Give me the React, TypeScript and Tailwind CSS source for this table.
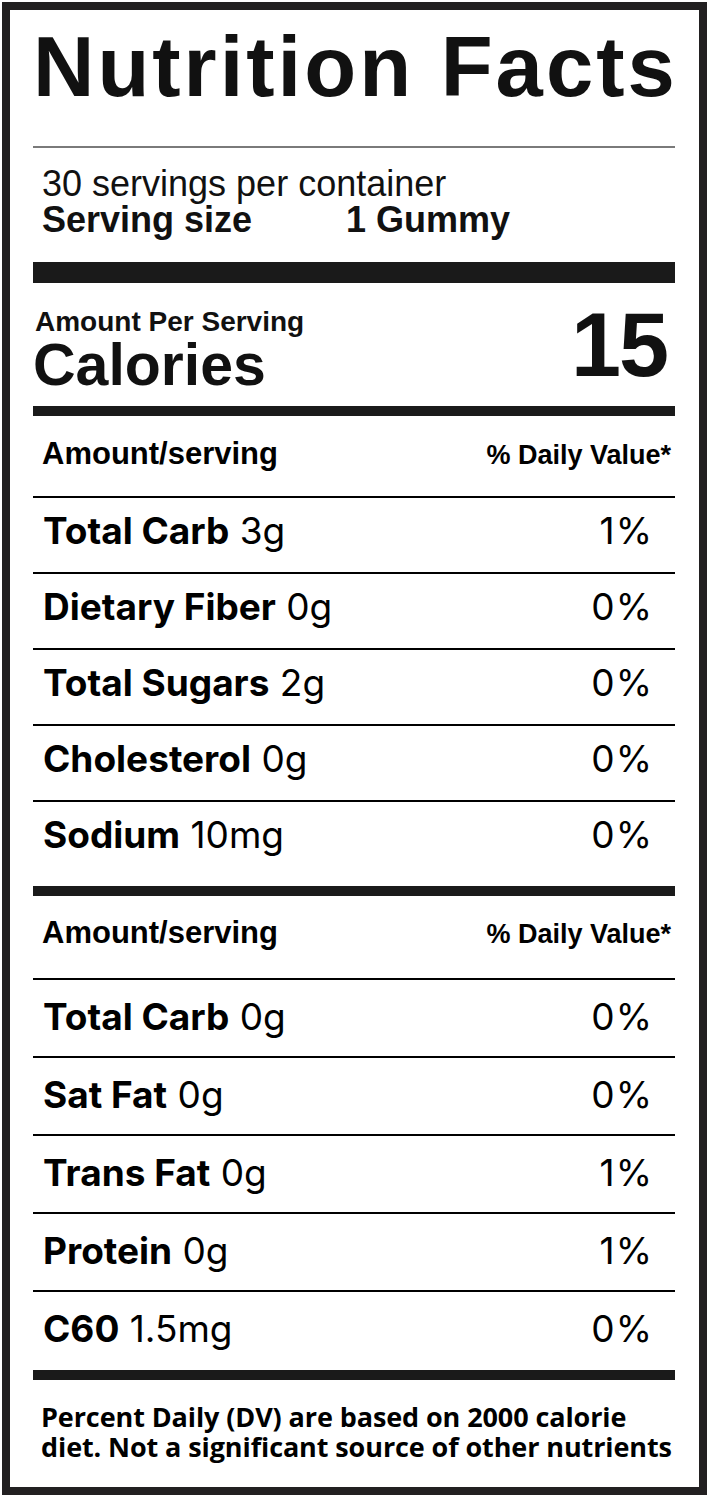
import React from 'react';

type Nutrient = {
  name: string;
  amount: string;
  dv: string;
};

const firstGroup: Nutrient[] = [
  { name: 'Total Carb', amount: '3g', dv: '1%' },
  { name: 'Dietary Fiber', amount: '0g', dv: '0%' },
  { name: 'Total Sugars', amount: '2g', dv: '0%' },
  { name: 'Cholesterol', amount: '0g', dv: '0%' },
  { name: 'Sodium', amount: '10mg', dv: '0%' },
];

const secondGroup: Nutrient[] = [
  { name: 'Total Carb', amount: '0g', dv: '0%' },
  { name: 'Sat Fat', amount: '0g', dv: '0%' },
  { name: 'Trans Fat', amount: '0g', dv: '1%' },
  { name: 'Protein', amount: '0g', dv: '1%' },
  { name: 'C60', amount: '1.5mg', dv: '0%' },
];

const ColumnHeader = ({ className }: { className: string }) => (
  <div className={`flex items-baseline justify-between border-b-2 border-black pl-[9px] pr-[4px] font-['Liberation_Sans',Arial,sans-serif] font-bold text-black ${className}`}>
    <span className="text-[31px] leading-[30px]">Amount/serving</span>
    <span className="text-[27px] leading-[30px]">% Daily Value*</span>
  </div>
);

const NutrientRow = ({ item, rowClass }: { item: Nutrient; rowClass: string }) => (
  <div className={`flex items-start justify-between pl-[10px] pr-[22px] font-['Inter',sans-serif] text-black ${rowClass}`}>
    <p className="whitespace-nowrap">
      <span className="font-bold">{item.name}</span>{' '}
      <span className="font-normal">{item.amount}</span>
    </p>
    <span className="font-normal tracking-[1px]">{item.dv}</span>
  </div>
);

export default function App() {
  return (
    <div className="h-[1500px] w-[709px] bg-white pl-[2px] pt-[2px]">
      <div className="h-[1493px] w-[705px] border-[8px] border-[#222021] bg-white pl-[23px] pr-[24px]">
        <h1 className="mt-[15px] whitespace-nowrap font-['Liberation_Sans',Arial,sans-serif] text-[85px] font-bold leading-[84px] tracking-[3px] text-[#111]">
          Nutrition Facts
        </h1>
        <div className="mt-[37px] h-[2px] bg-[#7a7a7a]" />

        <div className="mt-[18px] pl-[9px] font-['Liberation_Sans',Arial,sans-serif] text-[36px] leading-[36px] text-[#111]">
          <p>30 servings per container</p>
          <p className="flex font-bold">
            <span className="w-[304px]">Serving size</span>
            <span>1 Gummy</span>
          </p>
        </div>
        <div className="mt-[24px] h-[21px] bg-[#1a1a1a]" />

        <div className="mt-[25px] flex items-start justify-between font-['Liberation_Sans',Arial,sans-serif] font-bold text-[#111]">
          <div>
            <p className="pl-[2px] text-[28px] leading-[28px]">Amount Per Serving</p>
            <p className="text-[59px] leading-[59px]">Calories</p>
          </div>
          <span className="-mt-[8px] pr-[8px] text-[90px] leading-[90px] tracking-[-2px]">15</span>
        </div>
        <div className="mt-[11px] h-[10px] bg-[#1a1a1a]" />

        <ColumnHeader className="h-[82px] pt-[23px]" />
        {firstGroup.map((item, i) => (
          <NutrientRow
            key={item.name}
            item={item}
            rowClass={
              i < firstGroup.length - 1
                ? 'h-[76px] border-b-2 border-black pt-[15px] text-[37px] leading-[36px]'
                : 'h-[84px] pt-[15px] text-[37px] leading-[36px]'
            }
          />
        ))}
        <div className="h-[10px] bg-[#1a1a1a]" />

        <ColumnHeader className="h-[84px] pt-[22px]" />
        {secondGroup.map((item, i) => (
          <NutrientRow
            key={item.name}
            item={item}
            rowClass={
              i < secondGroup.length - 1
                ? 'h-[78px] border-b-2 border-black pt-[18px] text-[37px] leading-[37px]'
                : 'h-[78px] pt-[18px] text-[37px] leading-[37px]'
            }
          />
        ))}
        <div className="h-[10px] bg-[#1a1a1a]" />

        <div className="mt-[22px] whitespace-nowrap pl-[8px] font-['Open_Sans',sans-serif] text-[27px] font-bold leading-[30px] tracking-[-0.1px] text-black">
          <p>Percent Daily (DV) are based on 2000 calorie</p>
          <p>diet. Not a significant source of other nutrients</p>
        </div>
      </div>
    </div>
  );
}
